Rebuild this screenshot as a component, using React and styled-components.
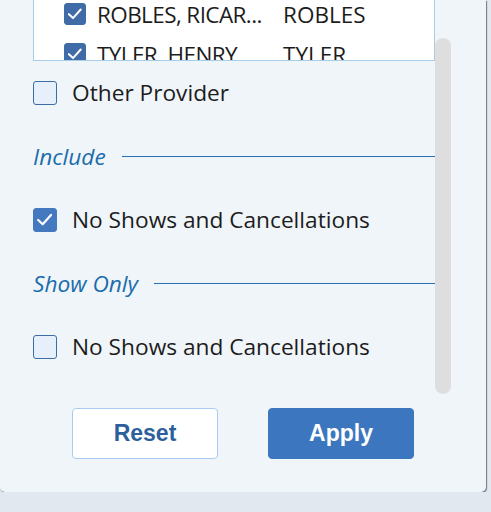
import React from 'react';
import styled, { createGlobalStyle } from 'styled-components';

const GlobalStyle = createGlobalStyle`
  html, body {
    margin: 0;
    padding: 0;
    background: #e2e8ef;
  }
  body {
    font-family: 'Open Sans', 'Noto Sans', sans-serif;
    color: #1c1c1c;
  }
`

const Panel = styled.div`
  width: 486px;
  height: 492px;
  box-sizing: border-box;
  background: #f0f5f9;
  border-radius: 0 0 5px 5px;
  box-shadow: 1px 1px 1px rgba(0, 0, 0, 0.45), 0 1px 3px rgba(0, 0, 0, 0.15);
  display: flex;
  flex-direction: column;
  overflow: hidden;
`

const ScrollArea = styled.div`
  height: 394px;
  display: flex;
  padding-left: 33px;
`

const Content = styled.div`
  width: 402px;
  display: flex;
  flex-direction: column;
`

const Track = styled.div`
  width: 16px;
  padding-top: 38px;
  box-sizing: border-box;
`

const Thumb = styled.div`
  height: 356px;
  border-radius: 8px;
  background: #dedede;
`

const ListBox = styled.div`
  height: 61px;
  box-sizing: border-box;
  background: #ffffff;
  border: 1px solid #a9cde6;
  border-top: none;
  overflow: hidden;
`

const ListInner = styled.div`
  margin-top: -6px;
  padding-left: 30px;
`

const ListRow = styled.div`
  height: 40px;
  display: flex;
  align-items: center;
  gap: 11px;
  font-size: 22.5px;
`

const NameCell = styled.span`
  width: 175px;
  white-space: nowrap;
  letter-spacing: -0.6px;
`

const Row = styled.label`
  height: 63.5px;
  display: flex;
  align-items: center;
  gap: 15px;
  font-size: 22.7px;
`

const Heading = styled.div`
  height: 63.5px;
  display: flex;
  align-items: center;
  gap: 16px;
  font-style: italic;
  font-size: 22.7px;
  color: #1b6dab;

  &::after {
    content: '';
    flex: 1;
    height: 1.5px;
    background: #2371b0;
  }
`

const Box = styled.span`
  width: ${p => p.size}px;
  height: ${p => p.size}px;
  flex: none;
  box-sizing: border-box;
  border-radius: 3px;
  border: 1.5px solid ${p => (p.checked ? p.tone : '#3b6ea8')};
  background: ${p => (p.checked ? p.tone : '#e6f0fb')};
  display: flex;
  align-items: center;
  justify-content: center;
`

const Footer = styled.div`
  display: flex;
  justify-content: center;
  gap: 50px;
  padding-top: 14px;
`

const Button = styled.button`
  width: 146px;
  height: 51px;
  border-radius: 4px;
  font-family: 'Liberation Sans', Arial, sans-serif;
  font-weight: bold;
  font-size: 23px;
  cursor: pointer;
  border: 1.5px solid ${p => (p.primary ? '#3c76bf' : '#a9cbf3')};
  background: ${p => (p.primary ? '#3c76bf' : '#ffffff')};
  color: ${p => (p.primary ? '#ffffff' : '#2d5f9c')};
`

const Check = ({ checked, size = 24, tone = '#4479bf' }) => (
  <Box checked={checked} size={size} tone={tone}>
    {checked && (
      <svg width={size * 0.8} height={size * 0.8} viewBox="0 0 14 14">
        <path d="M2.3 7.3 L5.6 10.4 L11.7 3.6" fill="none" stroke="#fff" strokeWidth="1.6" strokeLinecap="round" strokeLinejoin="round" />
      </svg>
    )}
  </Box>
)

const providers = [
  { name: 'ROBLES, RICAR...', last: 'ROBLES' },
  { name: 'TYLER, HENRY ...', last: 'TYLER' },
]

export default function App() {
  return (
    <>
      <GlobalStyle />
      <Panel>
        <ScrollArea>
          <Content>
            <ListBox>
              <ListInner>
                {providers.map(p => (
                  <ListRow key={p.last}>
                    <Check checked size={22} tone="#3f6ca7" />
                    <NameCell>{p.name}</NameCell>
                    <span>{p.last}</span>
                  </ListRow>
                ))}
              </ListInner>
            </ListBox>
            <Row>
              <Check />
              Other Provider
            </Row>
            <Heading>Include</Heading>
            <Row>
              <Check checked />
              No Shows and Cancellations
            </Row>
            <Heading>Show Only</Heading>
            <Row>
              <Check />
              No Shows and Cancellations
            </Row>
          </Content>
          <Track>
            <Thumb />
          </Track>
        </ScrollArea>
        <Footer>
          <Button>Reset</Button>
          <Button primary>Apply</Button>
        </Footer>
      </Panel>
    </>
  );
}
